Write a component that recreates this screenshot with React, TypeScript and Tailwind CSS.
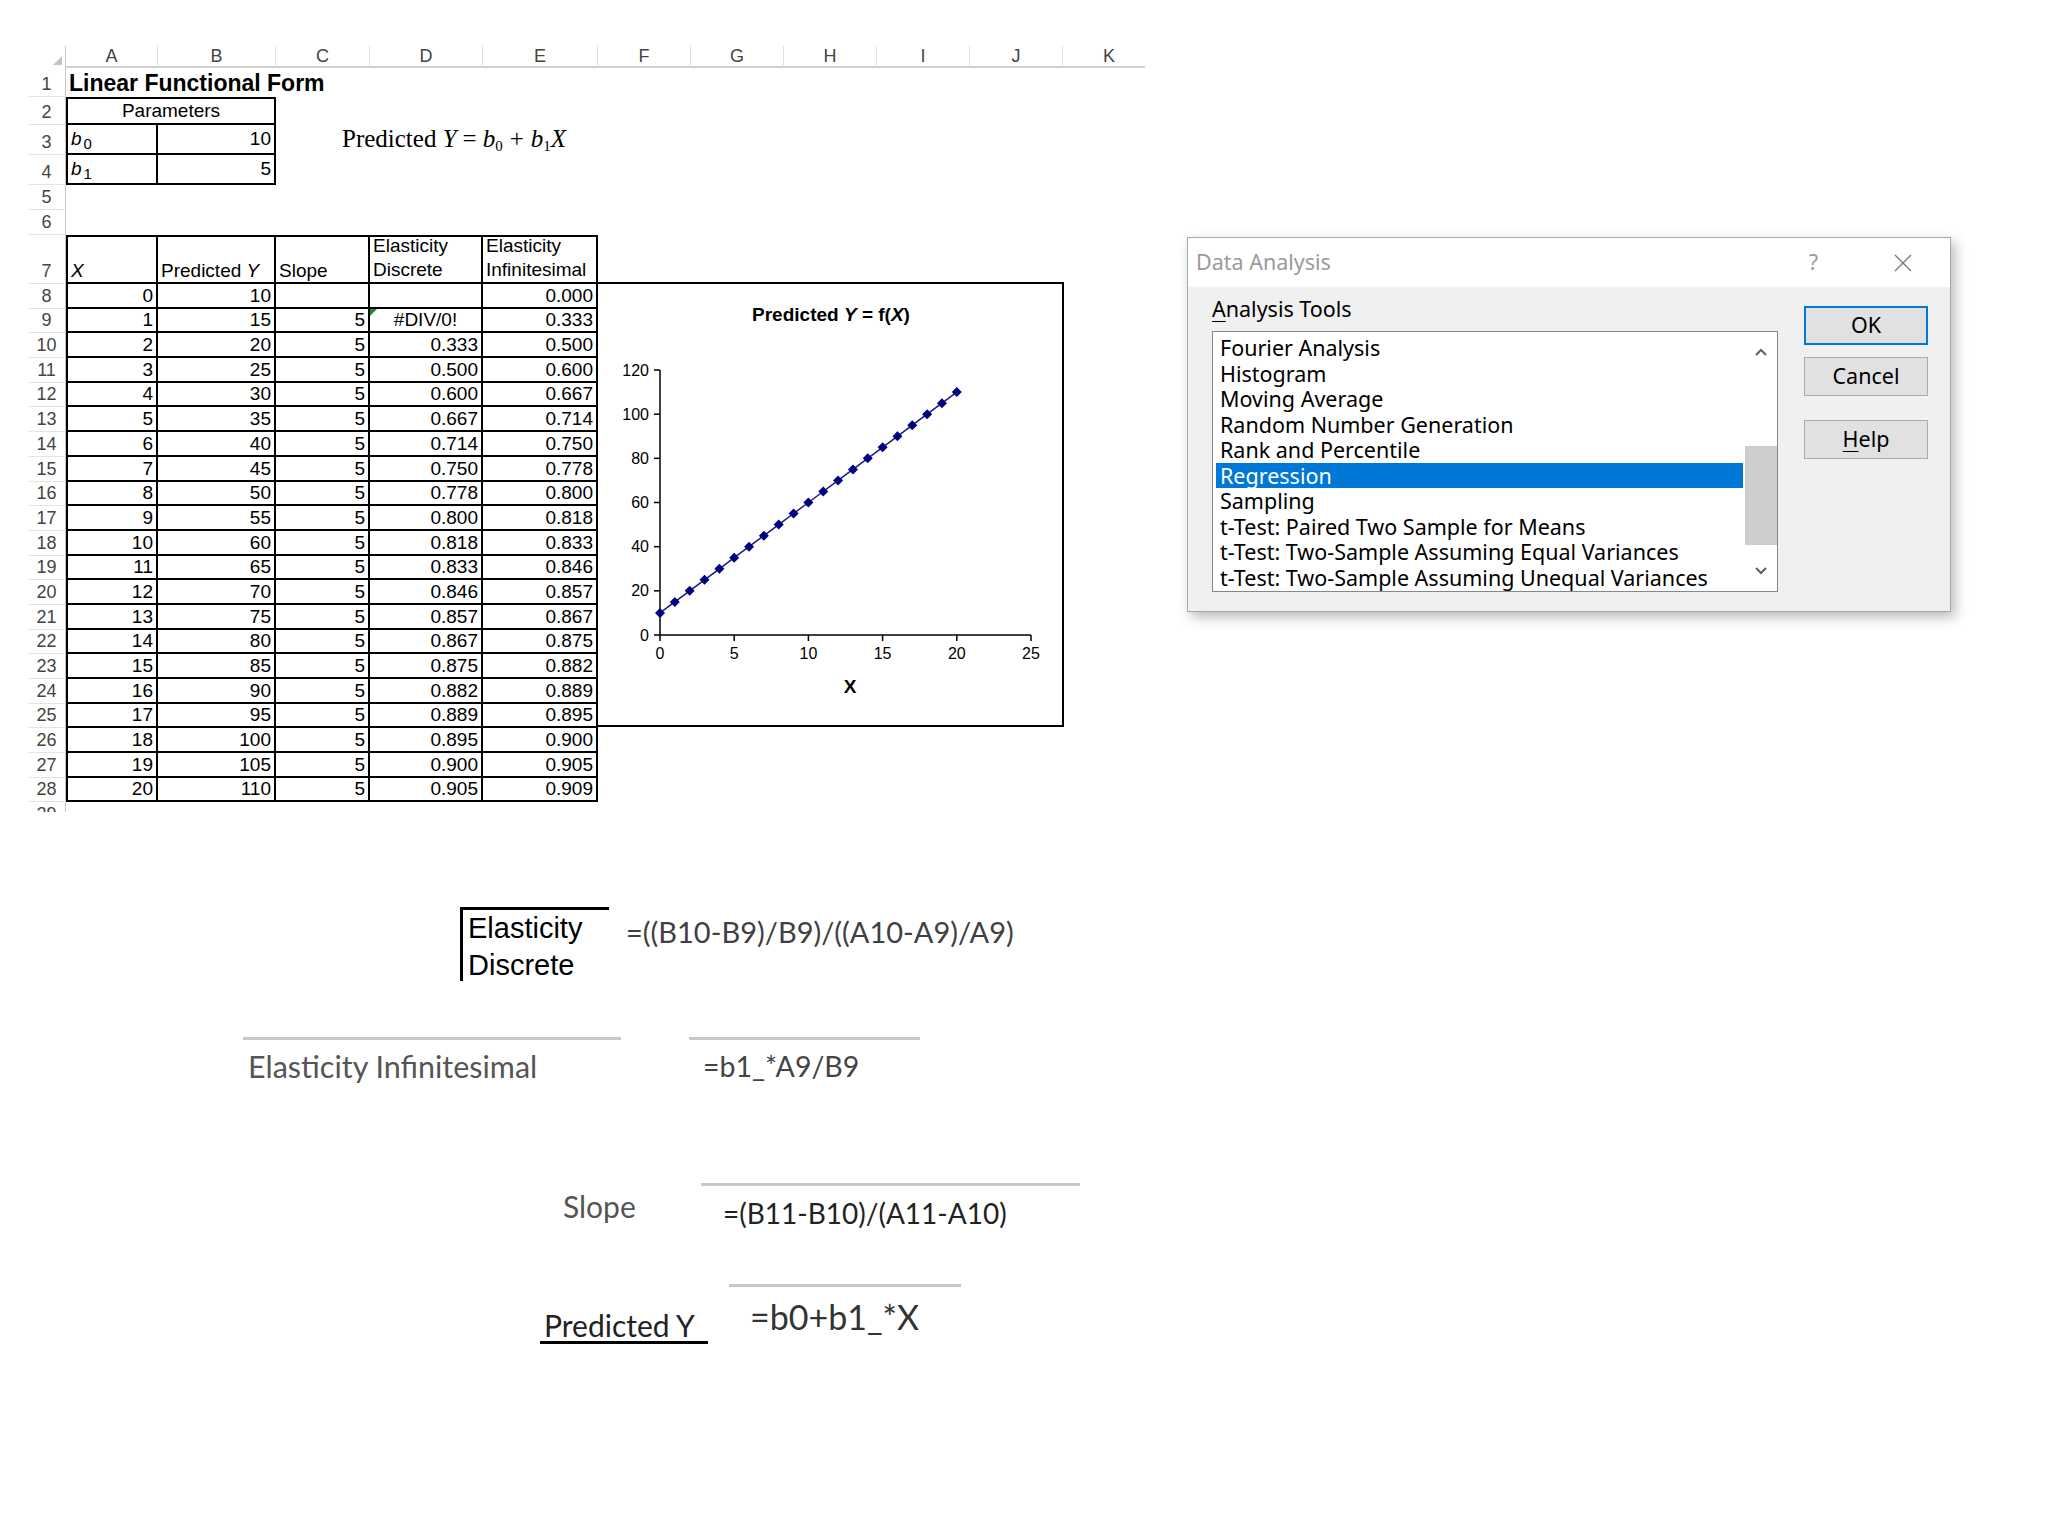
import React from 'react';

const HEADERS: [string, string][] = [
  ['A', 'w-[92px]'], ['B', 'w-[118px]'], ['C', 'w-[94px]'], ['D', 'w-[113px]'], ['E', 'w-[115px]'],
  ['F', 'w-[93px]'], ['G', 'w-[93px]'], ['H', 'w-[93px]'], ['I', 'w-[93px]'], ['J', 'w-[93px]'], ['K', 'w-[93px]'],
];

const data = Array.from({ length: 21 }, (_, k) => ({
  x: k,
  y: 10 + 5 * k,
  slope: k === 0 ? '' : '5',
  disc: k === 0 ? '' : k === 1 ? '#DIV/0!' : ((k - 1) / (k + 1)).toFixed(3),
  inf: (k / (k + 2)).toFixed(3),
}));

function RowHead({ n }: { n: number | string }) {
  return (
    <div className="w-[38px] shrink-0 flex items-end justify-center pb-[2px] border-r border-b border-r-[#c6c6c6] border-b-[#e4e4e4] text-[18px] leading-[20px] text-[#444]">
      {n}
    </div>
  );
}

function Row({ h, n, children }: { h: string; n: number | string; children?: React.ReactNode }) {
  return (
    <div className={`flex ${h}`}>
      <RowHead n={n} />
      {children}
    </div>
  );
}

const cellBase = 'shrink-0 flex px-[3px] text-[19px] leading-[22px] whitespace-nowrap';

function Chart() {
  const X0 = 62;
  const Y0 = 351;
  const sx = (433 - 62) / 25;
  const sy = (351 - 86) / 120;
  const pts = data.map((d) => ({ x: X0 + d.x * sx, y: Y0 - d.y * sy }));
  const line = pts.map((p, i) => `${i === 0 ? 'M' : 'L'}${p.x.toFixed(1)} ${p.y.toFixed(1)}`).join(' ');
  return (
    <div className="absolute left-[596px] top-[282px] w-[468px] h-[445px] border-2 border-black bg-white font-['Liberation_Sans',Arial,sans-serif]">
      <svg width="464" height="441" viewBox="0 0 464 441">
        <text x="233" y="37" textAnchor="middle" fontSize="19" fontWeight="bold" fill="#000">
          <tspan>Predicted </tspan>
          <tspan fontStyle="italic">Y</tspan>
          <tspan> = f(</tspan>
          <tspan fontStyle="italic">X</tspan>
          <tspan>)</tspan>
        </text>
        <line x1={X0} y1={86} x2={X0} y2={Y0} stroke="#000" strokeWidth="1.5" />
        <line x1={X0} y1={Y0} x2={433} y2={Y0} stroke="#000" strokeWidth="1.5" />
        {[0, 20, 40, 60, 80, 100, 120].map((v) => (
          <g key={v}>
            <line x1={X0 - 6} y1={Y0 - v * sy} x2={X0} y2={Y0 - v * sy} stroke="#000" strokeWidth="1.5" />
            <text x={X0 - 11} y={Y0 - v * sy + 5.5} textAnchor="end" fontSize="16" fill="#000">{v}</text>
          </g>
        ))}
        {[0, 5, 10, 15, 20, 25].map((v) => (
          <g key={v}>
            <line x1={X0 + v * sx} y1={Y0} x2={X0 + v * sx} y2={Y0 + 6} stroke="#000" strokeWidth="1.5" />
            <text x={X0 + v * sx} y={Y0 + 24} textAnchor="middle" fontSize="16" fill="#000">{v}</text>
          </g>
        ))}
        <text x="252" y="409" textAnchor="middle" fontSize="19" fontWeight="bold" fill="#000">X</text>
        <path d={line} fill="none" stroke="#1a1a80" strokeWidth="1.5" />
        {pts.map((p, i) => (
          <path key={i} d={`M${p.x} ${p.y - 5} L${p.x + 5} ${p.y} L${p.x} ${p.y + 5} L${p.x - 5} ${p.y} Z`} fill="#000080" />
        ))}
      </svg>
    </div>
  );
}

const items = [
  'Fourier Analysis',
  'Histogram',
  'Moving Average',
  'Random Number Generation',
  'Rank and Percentile',
  'Regression',
  'Sampling',
  't-Test: Paired Two Sample for Means',
  't-Test: Two-Sample Assuming Equal Variances',
  't-Test: Two-Sample Assuming Unequal Variances',
];

function Dialog() {
  return (
    <div className="absolute left-[1187px] top-[237px] w-[764px] h-[375px] bg-[#f0f0f0] border border-[#a8a8a8] shadow-[4px_5px_12px_rgba(0,0,0,0.28)] font-['Noto_Sans',sans-serif] text-[21.5px] text-black">
      <div className="h-[49px] flex items-center pl-[8px] pr-[38px] bg-white">
        <span className="text-[#9a9a9a]">Data Analysis</span>
        <span className="ml-auto text-[#9a9a9a] mr-[76px]">?</span>
        <svg width="18" height="18" viewBox="0 0 18 18">
          <path d="M1 1 L17 17 M17 1 L1 17" stroke="#777" strokeWidth="1.3" fill="none" />
        </svg>
      </div>
      <div className="flex pl-[24px]">
        <div className="w-[566px]">
          <div className="h-[44px] flex items-center">
            <span className="underline decoration-1 underline-offset-[4px]">A</span>nalysis Tools
          </div>
          <div className="h-[261px] bg-white border border-[#828790] flex">
            <div className="flex-1 pt-[3px] pl-[3px]">
              {items.map((it) => (
                <div
                  key={it}
                  className={`h-[25.5px] flex items-center pl-[4px] leading-[25px] whitespace-nowrap ${it === 'Regression' ? 'bg-[#0078d7] text-white' : ''}`}
                >
                  {it}
                </div>
              ))}
            </div>
            <div className="w-[32px] flex flex-col ml-[2px]">
              <div className="h-[40px] flex items-center justify-center">
                <svg width="12" height="8" viewBox="0 0 12 8">
                  <path d="M1 7 L6 2 L11 7" stroke="#606060" strokeWidth="2" fill="none" />
                </svg>
              </div>
              <div className="flex-1">
                <div className="mt-[74px] h-[99px] bg-[#cdcdcd]" />
              </div>
              <div className="h-[40px] flex items-center justify-center">
                <svg width="12" height="8" viewBox="0 0 12 8">
                  <path d="M1 1 L6 6 L11 1" stroke="#606060" strokeWidth="2" fill="none" />
                </svg>
              </div>
            </div>
          </div>
        </div>
        <div className="ml-[26px] w-[124px] pt-[19px] flex flex-col">
          <div className="h-[39px] flex items-center justify-center bg-[#e1e1e1] border-2 border-[#0078d7]">OK</div>
          <div className="mt-[12px] h-[39px] flex items-center justify-center bg-[#e1e1e1] border border-[#adadad]">Cancel</div>
          <div className="mt-[24px] h-[39px] flex items-center justify-center bg-[#e1e1e1] border border-[#adadad]">
            <span className="underline decoration-1 underline-offset-[4px]">H</span>elp
          </div>
        </div>
      </div>
    </div>
  );
}

function Annotations() {
  return (
    <>
      <div className="absolute left-[460px] top-[907px] w-[149px] h-[74px] border-t-[3px] border-l-[3px] border-black pl-[5px] font-['Liberation_Sans',Arial,sans-serif] text-[29px] leading-[37px] text-black">
        <div>Elasticity</div>
        <div>Discrete</div>
      </div>
      <div className="absolute left-[626px] top-[912px] h-[40px] leading-[40px] font-['Lato',sans-serif] text-[29px] text-[#404040] whitespace-nowrap">
        =((B10-B9)/B9)/((A10-A9)/A9)
      </div>

      <div className="absolute left-[243px] top-[1037px] w-[378px] h-[3px] bg-[#c8c8c8]" />
      <div className="absolute left-[689px] top-[1037px] w-[231px] h-[3px] bg-[#c8c8c8]" />
      <div className="absolute left-[248px] top-[1046px] h-[40px] leading-[40px] font-['Lato',sans-serif] text-[30.5px] text-[#555] whitespace-nowrap">
        Elasticity Infinitesimal
      </div>
      <div className="absolute left-[703px] top-[1046px] h-[40px] leading-[40px] font-['Lato',sans-serif] text-[28.5px] text-[#444] whitespace-nowrap">
        =b1_*A9/B9
      </div>

      <div className="absolute left-[563px] top-[1186px] h-[40px] leading-[40px] font-['Lato',sans-serif] text-[30px] text-[#555] whitespace-nowrap">
        Slope
      </div>
      <div className="absolute left-[701px] top-[1183px] w-[379px] h-[3px] bg-[#c8c8c8]" />
      <div className="absolute left-[723px] top-[1193px] h-[40px] leading-[40px] font-['Lato',sans-serif] text-[28px] text-[#222] whitespace-nowrap">
        =(B11-B10)/(A11-A10)
      </div>

      <div className="absolute left-[729px] top-[1284px] w-[232px] h-[3px] bg-[#c8c8c8]" />
      <div className="absolute left-[544px] top-[1305px] h-[40px] leading-[40px] font-['Lato',sans-serif] text-[30px] text-[#222] whitespace-nowrap">
        Predicted Y
      </div>
      <div className="absolute left-[540px] top-[1341px] w-[168px] h-[3px] bg-black" />
      <div className="absolute left-[750px] top-[1297px] h-[40px] leading-[40px] font-['Lato',sans-serif] text-[34px] text-[#333] whitespace-nowrap">
        =b0+b1_*X
      </div>
    </>
  );
}

export default function App() {
  return (
    <div className="relative w-[2048px] h-[1536px] bg-white overflow-hidden font-['Liberation_Sans',Arial,sans-serif] text-black">
      <div className="pt-[46px] pl-[28px]">
        <div className="w-[1117px] overflow-hidden">
          {/* column header */}
          <div className="flex h-[22px]">
            <div className="w-[38px] shrink-0 relative border-r border-[#c6c6c6]">
              <div className="absolute right-[3px] bottom-[3px] w-0 h-0 border-l-[9px] border-l-transparent border-b-[9px] border-b-[#c4c4c4]" />
            </div>
            {HEADERS.map(([l, w]) => (
              <div
                key={l}
                className={`${w} shrink-0 flex items-end justify-center border-r border-r-[#e2e2e2] border-b-2 border-b-[#d0d0d0] text-[18px] leading-[20px] text-[#444]`}
              >
                {l}
              </div>
            ))}
          </div>

          {/* row 1 */}
          <Row h="h-[29px]" n={1}>
            <div className={`${cellBase} w-[92px] items-end pb-[1px] overflow-visible`}>
              <span className="text-[23px] leading-[26px] font-bold">Linear Functional Form</span>
            </div>
          </Row>
          {/* row 2 */}
          <Row h="h-[28px]" n={2}>
            <div className={`${cellBase} w-[210px] items-center justify-center border-2 border-black`}>Parameters</div>
          </Row>
          {/* row 3 */}
          <Row h="h-[30px]" n={3}>
            <div className={`${cellBase} w-[92px] items-center border-l-2 border-r-2 border-b-2 border-black`}>
              <i>b</i>
              <span className="text-[15px] leading-[15px] mt-[8px] ml-[2px]">0</span>
            </div>
            <div className={`${cellBase} w-[118px] items-center justify-end border-r-2 border-b-2 border-black`}>10</div>
          </Row>
          {/* row 4 */}
          <Row h="h-[30px]" n={4}>
            <div className={`${cellBase} w-[92px] items-center border-l-2 border-r-2 border-b-2 border-black`}>
              <i>b</i>
              <span className="text-[15px] leading-[15px] mt-[8px] ml-[2px]">1</span>
            </div>
            <div className={`${cellBase} w-[118px] items-center justify-end border-r-2 border-b-2 border-black`}>5</div>
          </Row>
          <Row h="h-[25px]" n={5} />
          <Row h="h-[25px]" n={6} />
          {/* row 7 headers */}
          <Row h="h-[49px]" n={7}>
            <div className={`${cellBase} w-[92px] items-end border-2 border-black`}>
              <i>X</i>
            </div>
            <div className={`${cellBase} w-[118px] items-end border-t-2 border-r-2 border-b-2 border-black`}>
              <span>Predicted <i>Y</i></span>
            </div>
            <div className={`${cellBase} w-[94px] items-end border-t-2 border-r-2 border-b-2 border-black`}>Slope</div>
            <div className={`${cellBase} w-[113px] items-end border-t-2 border-r-2 border-b-2 border-black`}>
              <div className="leading-[24px]">Elasticity<br />Discrete</div>
            </div>
            <div className={`${cellBase} w-[115px] items-end border-t-2 border-r-2 border-b-2 border-black`}>
              <div className="leading-[24px]">Elasticity<br />Infinitesimal</div>
            </div>
          </Row>
          {/* data */}
          {data.map((d, i) => (
            <Row key={i} h="h-[24.7px]" n={8 + i}>
              <div className={`${cellBase} w-[92px] items-end justify-end border-l-2 border-r-2 border-b-2 border-black`}>{d.x}</div>
              <div className={`${cellBase} w-[118px] items-end justify-end border-r-2 border-b-2 border-black`}>{d.y}</div>
              <div className={`${cellBase} w-[94px] items-end justify-end border-r-2 border-b-2 border-black`}>{d.slope}</div>
              <div
                className={`${cellBase} w-[113px] items-end relative border-r-2 border-b-2 border-black ${d.disc === '#DIV/0!' ? 'justify-center' : 'justify-end'}`}
              >
                {d.disc === '#DIV/0!' && (
                  <div className="absolute left-0 top-0 w-0 h-0 border-t-[7px] border-t-[#1e8a3a] border-r-[7px] border-r-transparent" />
                )}
                {d.disc}
              </div>
              <div className={`${cellBase} w-[115px] items-end justify-end border-r-2 border-b-2 border-black`}>{d.inf}</div>
            </Row>
          ))}
          {/* row 29 (cut off by the screenshot edge) */}
          <div className="h-[10px] overflow-hidden">
            <Row h="h-[24.7px]" n={29} />
          </div>
        </div>
      </div>

      {/* equation object */}
      <div className="absolute left-[342px] top-[123px] h-[32px] leading-[32px] font-['Liberation_Serif',serif] text-[25px] whitespace-nowrap">
        Predicted <i>Y</i>
        <span className="mx-[6px]">=</span>
        <i>b</i>
        <sub className="text-[15px]">0</sub>
        <span className="mx-[7px]">+</span>
        <i>b</i>
        <sub className="text-[15px]">1</sub>
        <i>X</i>
      </div>

      <Chart />
      <Dialog />
      <Annotations />
    </div>
  );
}
